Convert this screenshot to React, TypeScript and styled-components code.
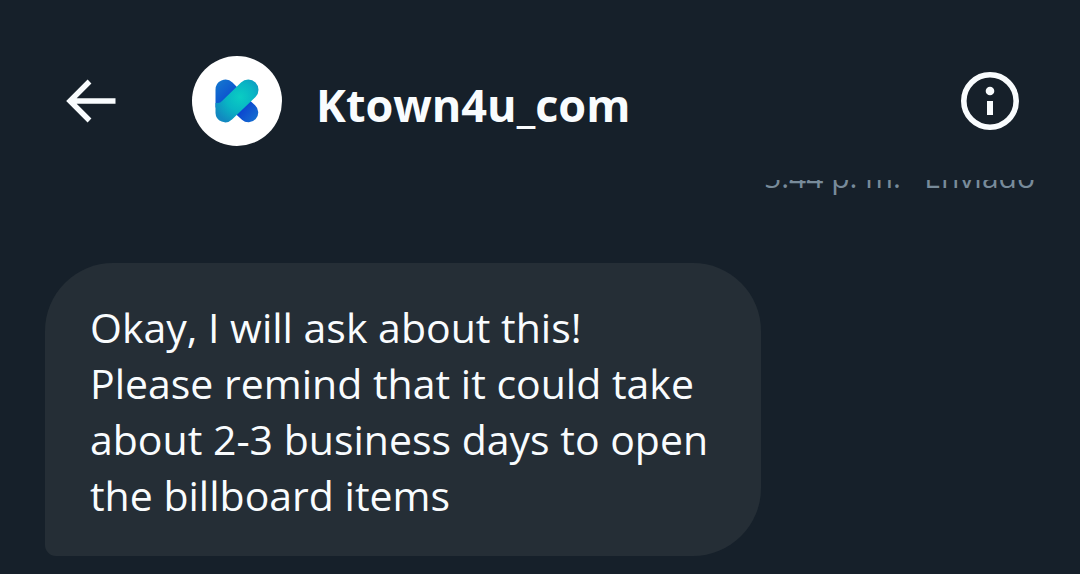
import React from "react";
import styled, { createGlobalStyle } from "styled-components";

const GlobalStyle = createGlobalStyle`
  *, *::before, *::after { box-sizing: border-box; }
  body {
    margin: 0;
    background: #16202a;
    color: #f9fcfe;
    font-family: "Open Sans", "Noto Sans", sans-serif;
  }
`;

const Screen = styled.div`
  display: flex;
  flex-direction: column;
  height: 100vh;
`;

const Header = styled.header`
  flex: none;
  display: flex;
  align-items: center;
  padding: 56px 60px 34px;
`;

const IconButton = styled.button`
  display: flex;
  flex: none;
  padding: 0;
  border: 0;
  background: none;
  color: inherit;
  cursor: pointer;
`;

const Avatar = styled.div`
  flex: none;
  display: flex;
  align-items: center;
  justify-content: center;
  width: 90px;
  height: 90px;
  margin: 0 34px 0 72px;
  border-radius: 50%;
  background: #fff;
`;

const Title = styled.h1`
  flex: 1;
  min-width: 0;
  margin: 0;
  padding-top: 8px;
  font-size: 45px;
  line-height: 64px;
  font-weight: 700;
`;

const Messages = styled.main`
  flex: 1;
  min-height: 0;
  display: flex;
  flex-direction: column;
  justify-content: flex-end;
  overflow: hidden;
  padding: 0 45px 18px;
`;

const Status = styled.p`
  flex: none;
  align-self: flex-end;
  margin: 0 0 66px;
  color: #788b9a;
  font-size: 30px;
  line-height: 40px;
`;

const Bubble = styled.p`
  flex: none;
  align-self: flex-start;
  max-width: 716px;
  margin: 0;
  padding: 36px 45px 33px;
  border-radius: 68px 68px 68px 11px;
  background: #252e36;
  font-size: 41px;
  line-height: 56px;
  white-space: pre-line;
`;

const BackIcon = () => (
  <svg width="60" height="60" viewBox="0 0 60 60" fill="none" stroke="currentColor" strokeWidth="5.4" aria-hidden="true">
    <path d="M55.5 30H10M29.5 10.5 10 30l19.5 19.5" />
  </svg>
);

const InfoIcon = () => (
  <svg width="60" height="60" viewBox="0 0 60 60" aria-hidden="true">
    <circle cx="30" cy="30" r="26.2" fill="none" stroke="currentColor" strokeWidth="5.6" />
    <circle cx="30" cy="20" r="4.3" fill="currentColor" />
    <path d="M27 30h6v14h-6z" fill="currentColor" />
  </svg>
);

const Logo = () => (
  <svg width="64" height="64" viewBox="0 -1 64 64" fill="none" strokeLinecap="round" aria-hidden="true">
    <defs>
      <linearGradient id="upper" gradientUnits="userSpaceOnUse" x1="11" y1="12" x2="30" y2="32">
        <stop offset="0" stopColor="#1477cf" />
        <stop offset="1" stopColor="#0a45cf" />
      </linearGradient>
      <linearGradient id="lower" gradientUnits="userSpaceOnUse" x1="36" y1="36" x2="53" y2="50">
        <stop offset="0" stopColor="#0a3fd0" />
        <stop offset="1" stopColor="#1672d0" />
      </linearGradient>
      <radialGradient id="band" gradientUnits="userSpaceOnUse" cx="35" cy="27" r="28">
        <stop offset="0" stopColor="#0acdc3" />
        <stop offset="0.5" stopColor="#08b5c4" />
        <stop offset="1" stopColor="#1289c0" />
      </radialGradient>
    </defs>
    <path d="M10.5 20a10 10 0 0 1 17-7.5l7 7-18 18h-6z" fill="url(#upper)" />
    <path d="M32 32 43.5 42.5" stroke="url(#lower)" strokeWidth="19.5" />
    <path
      d="M10.5 33h2.5a6 6 0 0 0 4-2l19-18.5a10.2 10.2 0 0 1 14.5 14.5L27 49.5A9.7 9.7 0 0 1 10.5 43z"
      fill="url(#band)"
    />
  </svg>
);

export default function App() {
  return (
    <>
      <GlobalStyle />
      <Screen>
        <Header>
          <IconButton type="button" aria-label="Atrás">
            <BackIcon />
          </IconButton>
          <Avatar>
            <Logo />
          </Avatar>
          <Title>Ktown4u_com</Title>
          <IconButton type="button" aria-label="Información">
            <InfoIcon />
          </IconButton>
        </Header>
        <Messages>
          <Status>5:44 p. m. · Enviado</Status>
          <Bubble>
            {"Okay, I will ask about this!\nPlease remind that it could take about 2-3 business days to open the billboard items"}
          </Bubble>
        </Messages>
      </Screen>
    </>
  );
}
